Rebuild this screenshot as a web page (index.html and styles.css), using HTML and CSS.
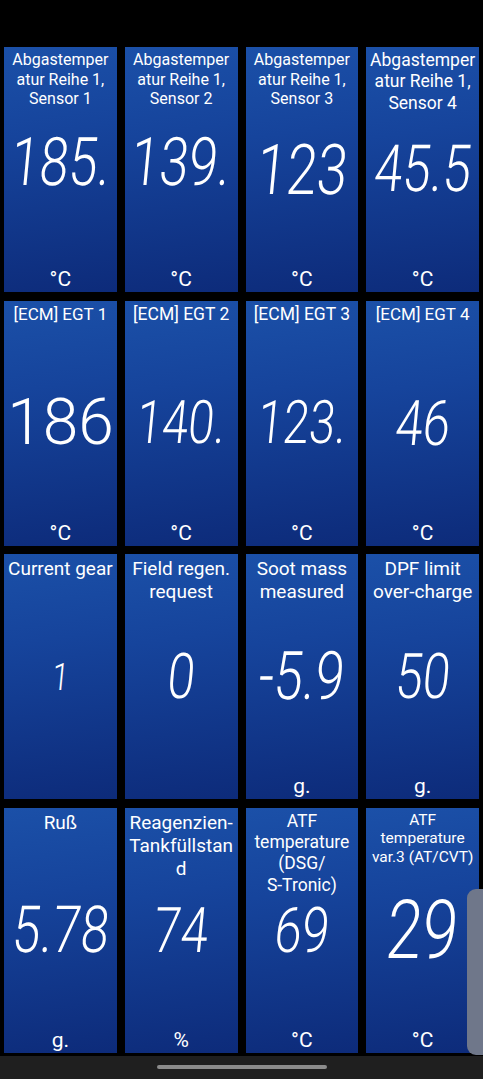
FILE: index.html
```html
<!DOCTYPE html>
<html lang="de">

<head>
    <meta charset="UTF-8">
    <meta name="viewport" content="width=device-width, initial-scale=1.0">
    <title>Dashboard</title>
    <link rel="stylesheet" href="styles.css">
</head>

<body>
    <div class="screen">
        <div class="status-bar"></div>

        <main class="gauge-grid">
            <!-- row 1 -->
            <div class="gauge">
                <div class="gauge-label">Abgastemper<br>atur Reihe 1,<br>Sensor 1</div>
                <div class="gauge-value gauge-value--high">185.</div>
                <div class="gauge-unit">°C</div>
            </div>
            <div class="gauge">
                <div class="gauge-label">Abgastemper<br>atur Reihe 1,<br>Sensor 2</div>
                <div class="gauge-value gauge-value--high">139.</div>
                <div class="gauge-unit">°C</div>
            </div>
            <div class="gauge">
                <div class="gauge-label">Abgastemper<br>atur Reihe 1,<br>Sensor 3</div>
                <div class="gauge-value gauge-value--xl">123</div>
                <div class="gauge-unit">°C</div>
            </div>
            <div class="gauge">
                <div class="gauge-label label-lg">Abgastemper<br>atur Reihe 1,<br>Sensor 4</div>
                <div class="gauge-value gauge-value--wide">45.5</div>
                <div class="gauge-unit">°C</div>
            </div>

            <!-- row 2 -->
            <div class="gauge">
                <div class="gauge-label label-md">[ECM] EGT 1</div>
                <div class="gauge-value gauge-value--plain">186</div>
                <div class="gauge-unit">°C</div>
            </div>
            <div class="gauge">
                <div class="gauge-label label-lg">[ECM] EGT 2</div>
                <div class="gauge-value gauge-value--sm">140.</div>
                <div class="gauge-unit">°C</div>
            </div>
            <div class="gauge">
                <div class="gauge-label label-lg">[ECM] EGT 3</div>
                <div class="gauge-value gauge-value--sm">123.</div>
                <div class="gauge-unit">°C</div>
            </div>
            <div class="gauge">
                <div class="gauge-label label-md">[ECM] EGT 4</div>
                <div class="gauge-value gauge-value--md">46</div>
                <div class="gauge-unit">°C</div>
            </div>

            <!-- row 3 -->
            <div class="gauge">
                <div class="gauge-label label-xl">Current gear</div>
                <div class="gauge-value gauge-value--tiny">1</div>
                <div class="gauge-unit"></div>
            </div>
            <div class="gauge">
                <div class="gauge-label label-xl">Field regen.<br>request</div>
                <div class="gauge-value gauge-value--md">0</div>
                <div class="gauge-unit"></div>
            </div>
            <div class="gauge">
                <div class="gauge-label label-xl">Soot mass<br>measured</div>
                <div class="gauge-value">-5.9</div>
                <div class="gauge-unit">g.</div>
            </div>
            <div class="gauge">
                <div class="gauge-label label-xl">DPF limit<br>over-charge</div>
                <div class="gauge-value gauge-value--md">50</div>
                <div class="gauge-unit">g.</div>
            </div>

            <!-- row 4 -->
            <div class="gauge">
                <div class="gauge-label label-xl">Ruß</div>
                <div class="gauge-value gauge-value--wide">5.78</div>
                <div class="gauge-unit">g.</div>
            </div>
            <div class="gauge">
                <div class="gauge-label label-xl">Reagenzien-<br>Tankfüllstan<br>d</div>
                <div class="gauge-value gauge-value--md">74</div>
                <div class="gauge-unit">%</div>
            </div>
            <div class="gauge">
                <div class="gauge-label label-lg">ATF<br>temperature<br>(DSG/<br>S-Tronic)</div>
                <div class="gauge-value gauge-value--md">69</div>
                <div class="gauge-unit">°C</div>
            </div>
            <div class="gauge">
                <div class="gauge-label label-sm">ATF<br>temperature<br>var.3 (AT/CVT)</div>
                <div class="gauge-value gauge-value--big">29</div>
                <div class="gauge-unit">°C</div>
            </div>
        </main>

        <div class="nav-bar"><span class="nav-pill"></span></div>

        <!-- scroll thumb lies over the last column -->
        <div class="scroll-thumb"></div>
    </div>
</body>

</html>
```

FILE: styles.css
```css
body {
    margin: 0;
    background-color: #000;
    color: #fff;
    font-family: 'Roboto', 'Noto Sans', sans-serif;
}

.screen {
    position: relative;
    width: 483px;
    height: 1079px;
    display: flex;
    flex-direction: column;
    overflow: hidden;
    background-color: #000;
}

.status-bar {
    height: 47px;
    flex: none;
}

.gauge-grid {
    display: grid;
    grid-template-columns: repeat(4, minmax(0, 1fr));
    grid-template-rows: repeat(4, 245px);
    gap: 8.5px 8px;
    padding: 0 4px;
}

.gauge {
    display: grid;
    grid-template-columns: minmax(0, 1fr);
    grid-template-rows: minmax(0, 1fr);
    overflow: hidden;
    text-align: center;
    background: linear-gradient(172deg, #1b50a8 0%, #16449c 35%, #0d2b7a 100%);
}

/* label, value and unit share the one cell */
.gauge > div {
    grid-area: 1 / 1;
}

.gauge-label {
    align-self: start;
    padding-top: 3px;
    font-size: 16px;
    line-height: 1.22;
}

.label-sm {
    font-size: 15.5px;
}

.label-md {
    font-size: 17px;
}

.label-lg {
    font-size: 17.5px;
}

.label-xl {
    font-size: 19px;
}

.gauge-value {
    align-self: center;
    justify-self: center;
    white-space: nowrap;
    font-size: 67px;
    font-weight: 300;
    line-height: 1;
    transform: scaleX(0.78) skewX(-7deg);
}

.gauge-value--high {
    margin-bottom: 14px;
}

.gauge-value--xl {
    font-size: 70px;
}

.gauge-value--wide {
    font-size: 65px;
}

.gauge-value--md {
    font-size: 63px;
}

.gauge-value--sm {
    font-size: 60px;
}

.gauge-value--big {
    font-size: 82px;
}

.gauge-value--tiny {
    font-size: 38px;
}

.gauge-value--plain {
    font-size: 64px;
    transform: none;
}

.gauge-unit {
    align-self: end;
    font-size: 21px;
    line-height: 24px;
    padding-bottom: 1px;
}

.nav-bar {
    flex: none;
    height: 23px;
    margin-top: auto;
    background-color: #1f1f1f;
    display: flex;
    justify-content: center;
    padding-top: 9px;
    box-sizing: border-box;
}

.nav-pill {
    width: 170px;
    height: 4px;
    border-radius: 2px;
    background-color: #8b8b8b;
}

.scroll-thumb {
    position: absolute;
    top: 889px;
    right: 0;
    width: 16px;
    height: 166px;
    border-radius: 9px 0 0 9px;
    background-color: #6f778a;
}
```
